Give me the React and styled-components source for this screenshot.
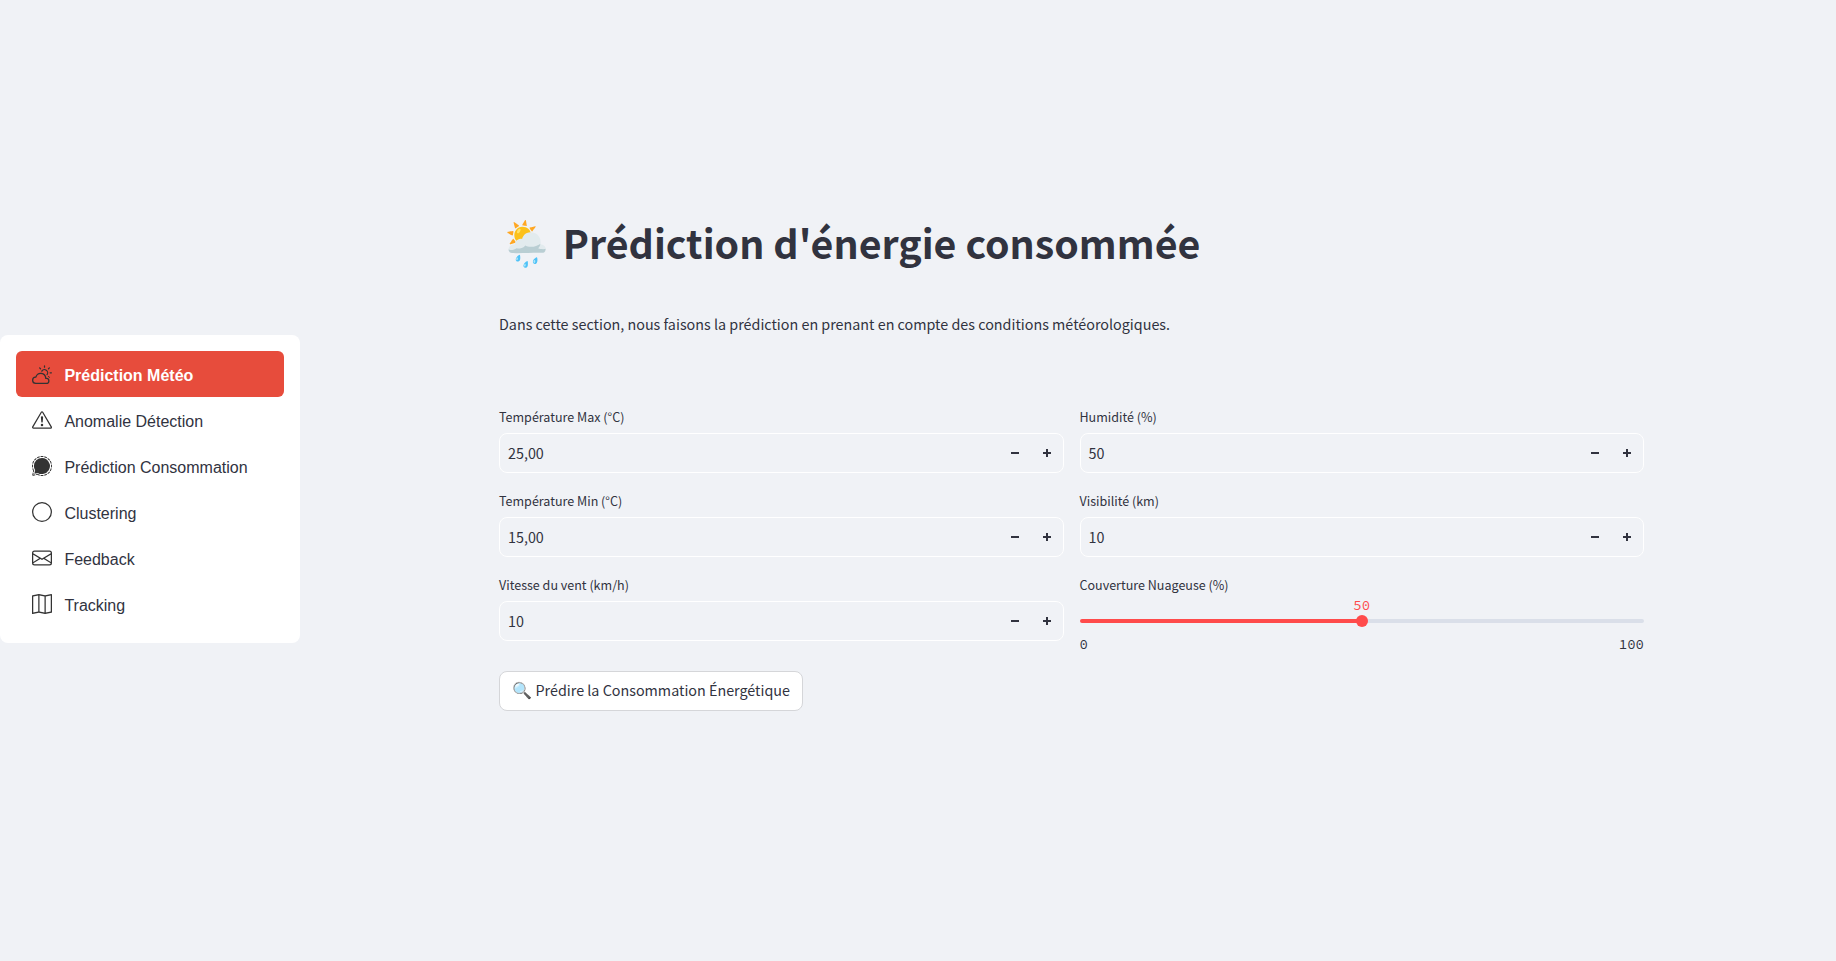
import React from 'react';
import styled, { createGlobalStyle } from 'styled-components';
import {
  BsCloudSun,
  BsExclamationTriangle,
  BsSignal,
  BsCircle,
  BsEnvelope,
  BsMap,
} from 'react-icons/bs';

const GlobalStyle = createGlobalStyle`
  *, *::before, *::after { box-sizing: border-box; }
  body {
    margin: 0;
    background: #f0f2f6;
    color: #31333f;
    font-family: "Noto Sans CJK JP", "Noto Sans", sans-serif;
    font-size: 14.33px;
    line-height: 24px;
  }
`;

const Page = styled.div`
  display: flex;
  height: 961px;
  overflow: hidden;
`;

const Sidebar = styled.nav`
  flex: none;
  width: 300px;
  margin-top: 335px;
  align-self: flex-start;
  padding: 16px;
  border-radius: 8px;
  background: #fff;
`;

const NavItem = styled.a`
  display: flex;
  align-items: center;
  height: 46px;
  padding: 0 16px;
  border-radius: 6px;
  font-family: "Liberation Sans", Arial, sans-serif;
  font-size: 16px;
  line-height: 24px;
  font-weight: ${(p) => (p.$active ? 600 : 400)};
  color: ${(p) => (p.$active ? '#fff' : '#31333f')};
  background: ${(p) => (p.$active ? '#e74c3c' : 'transparent')};

  svg {
    flex: none;
    width: 20px;
    height: 20px;
    margin: 0 12.4px 1px 0;
    color: #333;
  }

  span {
    padding-top: 4px;
  }
`;

const Main = styled.main`
  width: 1145px;
  margin-left: 199px;
  padding-top: 204px;
`;

const Title = styled.h1`
  display: flex;
  align-items: center;
  height: 80px;
  margin: 0;
  font-size: 39.35px;
  font-weight: 700;
  line-height: 53px;
  white-space: pre;
`;

const TitleText = styled.span`
  padding-bottom: 6px;
`;

const Emoji = styled.span`
  font-family: "Noto Color Emoji", sans-serif;
  font-size: ${(p) => p.$size}px;
  margin-right: ${(p) => p.$gap}px;
`;

const Intro = styled.p`
  margin: 28px 0 0;
  white-space: nowrap;
`;

const Columns = styled.div`
  display: grid;
  grid-template-columns: 1fr 1fr;
  gap: 16px;
  margin-top: 69px;
`;

const Column = styled.div`
  display: flex;
  flex-direction: column;
  gap: 16px;
`;

const Label = styled.label`
  display: block;
  height: 24px;
  margin-bottom: 4px;
  font-size: 12.54px;
`;

const InputBox = styled.div`
  display: flex;
  align-items: center;
  height: 40px;
  padding: 0 0 0 8px;
  border: 1px solid #fff;
  border-radius: 8px;
`;

const Value = styled.span`
  flex: 1;
`;

const StepButton = styled.button`
  display: flex;
  align-items: center;
  justify-content: center;
  width: 32px;
  height: 38px;
  padding: 0;
  border: 0;
  background: none;
  color: #31333f;
`;

const SliderArea = styled.div`
  height: 54px;
  padding-top: 18px;
`;

const Track = styled.div`
  position: relative;
  height: 4px;
  border-radius: 4px;
  background: linear-gradient(to right, #ff4b4b 50%, #dadfe9 50%);
`;

const Thumb = styled.div`
  position: absolute;
  left: 50%;
  top: -4px;
  width: 12px;
  height: 12px;
  margin-left: -6px;
  border-radius: 50%;
  background: #ff4b4b;
`;

const ThumbValue = styled.span`
  position: absolute;
  left: 50%;
  bottom: 10px;
  transform: translateX(-50%);
  font: 14px/16px "Source Code Pro", "Liberation Mono", monospace;
  color: #ff4b4b;
`;

const Bounds = styled.div`
  display: flex;
  justify-content: space-between;
  margin-top: 12px;
  font: 14px/18px "Source Code Pro", "Liberation Mono", monospace;
`;

const Submit = styled.button`
  display: flex;
  align-items: center;
  height: 40px;
  margin-top: 16px;
  padding: 0 12px;
  border: 1px solid #d5d6d9;
  border-radius: 8px;
  background: #fff;
  color: #31333f;
  font: inherit;
  white-space: nowrap;
`;

const SubmitText = styled.span`
  padding-bottom: 2px;
`;

const MinusIcon = () => (
  <svg width="8" height="8" viewBox="0 0 8 8" fill="currentColor">
    <path d="M0 3h8v2H0z" />
  </svg>
);

const PlusIcon = () => (
  <svg width="8" height="8" viewBox="0 0 8 8" fill="currentColor">
    <path d="M3 0h2v3h3v2H5v3H3V5H0V3h3z" />
  </svg>
);

function NumberField({ label, value }) {
  return (
    <div>
      <Label>{label}</Label>
      <InputBox>
        <Value>{value}</Value>
        <StepButton aria-label="-">
          <MinusIcon />
        </StepButton>
        <StepButton aria-label="+">
          <PlusIcon />
        </StepButton>
      </InputBox>
    </div>
  );
}

const NAV = [
  ['Prédiction Météo', BsCloudSun],
  ['Anomalie Détection', BsExclamationTriangle],
  ['Prédiction Consommation', BsSignal],
  ['Clustering', BsCircle],
  ['Feedback', BsEnvelope],
  ['Tracking', BsMap],
];

export default function App() {
  return (
    <Page>
      <GlobalStyle />
      <Sidebar>
        {NAV.map(([text, Icon], i) => (
          <NavItem key={text} $active={i === 0}>
            <Icon />
            <span>{text}</span>
          </NavItem>
        ))}
      </Sidebar>
      <Main>
        <Title>
          <Emoji $size={44} $gap={9}>🌦️</Emoji>
          <TitleText>Prédiction d'énergie consommée</TitleText>
        </Title>
        <Intro>
          Dans cette section, nous faisons la prédiction en prenant en compte des conditions
          météorologiques.
        </Intro>
        <Columns>
          <Column>
            <NumberField label="Température Max (°C)" value="25,00" />
            <NumberField label="Température Min (°C)" value="15,00" />
            <NumberField label="Vitesse du vent (km/h)" value="10" />
          </Column>
          <Column>
            <NumberField label="Humidité (%)" value="50" />
            <NumberField label="Visibilité (km)" value="10" />
            <div>
              <Label>Couverture Nuageuse (%)</Label>
              <SliderArea>
                <Track>
                  <ThumbValue>50</ThumbValue>
                  <Thumb />
                </Track>
                <Bounds>
                  <span>0</span>
                  <span>100</span>
                </Bounds>
              </SliderArea>
            </div>
          </Column>
        </Columns>
        <Submit>
          <Emoji $size={16} $gap={3.6}>🔍</Emoji>
          <SubmitText>Prédire la Consommation Énergétique</SubmitText>
        </Submit>
      </Main>
    </Page>
  );
}
